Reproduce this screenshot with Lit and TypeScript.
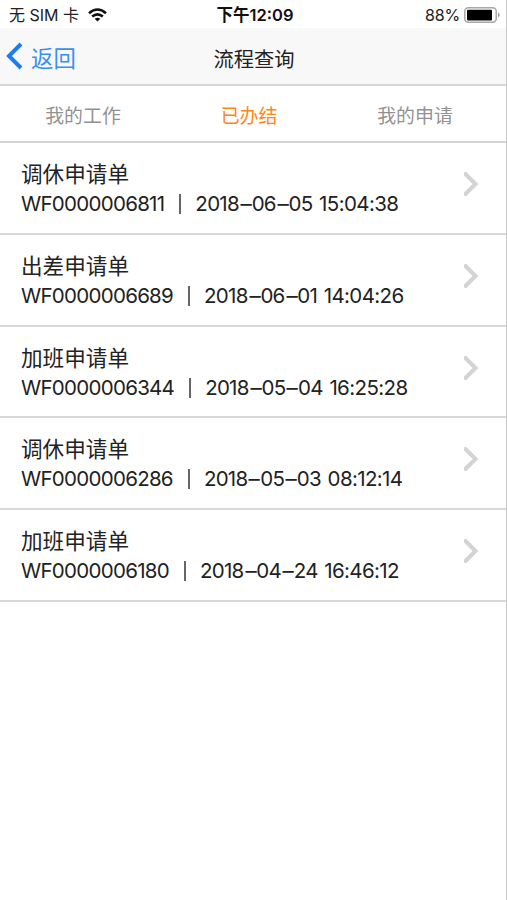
import { LitElement, html, css } from "lit";
import { customElement, property } from "lit/decorators.js";

interface Form {
  title: string;
  code: string;
  date: string[];
  time: string;
}

const forms: Form[] = [
  { title: "调休申请单", code: "WF0000006811", date: ["2018", "06", "05"], time: "15:04:38" },
  { title: "出差申请单", code: "WF0000006689", date: ["2018", "06", "01"], time: "14:04:26" },
  { title: "加班申请单", code: "WF0000006344", date: ["2018", "05", "04"], time: "16:25:28" },
  { title: "调休申请单", code: "WF0000006286", date: ["2018", "05", "03"], time: "08:12:14" },
  { title: "加班申请单", code: "WF0000006180", date: ["2018", "04", "24"], time: "16:46:12" },
];

@customElement("status-bar")
class StatusBar extends LitElement {
  static styles = css`
    :host { display: grid; grid-template-columns: 1fr auto 1fr; align-items: center; height: 28px;
      padding: 2px 6px 0 9px; box-sizing: border-box; background: #fff; color: #222; font-size: 16px; line-height: 24px; }
    .side { display: flex; align-items: center; gap: 9px; white-space: pre; }
    .right { justify-content: flex-end; gap: 4px; letter-spacing: -0.2px; }
    .clock { font-size: 16.5px; font-weight: 600; color: #111; padding-left: 1px; }
    svg { display: block; }
    .right svg { margin-right: -1px; }
  `;
  render() {
    return html`
      <div class="side"><span>无 SIM 卡</span>
        <svg width="19" height="14" viewBox="0 0 19 14" fill="none" stroke="#111" stroke-width="2.6">
          <path d="M1 5.2Q9.5 -2.2 18 5.2" /><path d="M4.2 8.6Q9.5 4.1 14.8 8.6" />
          <path d="M9.5 13.4L6.6 10.8Q9.5 8.8 12.4 10.8Z" fill="#111" stroke="none" />
        </svg>
      </div>
      <span class="clock">下午12:09</span>
      <div class="side right"><span>88%</span>
        <svg width="37" height="16" viewBox="0 0 37 16">
          <rect x=".8" y=".8" width="31.4" height="14.4" rx="3.5" fill="#fff" stroke="#a8a8a8" stroke-width="1.5" />
          <rect x="3" y="2.8" width="25" height="10.6" rx="1" fill="#000" />
          <path d="M34 5.5Q37.5 8 34 10.5Z" fill="#999" />
        </svg>
      </div>`;
  }
}

@customElement("form-row")
class FormRow extends LitElement {
  @property({ attribute: false }) form!: Form;
  static styles = css`
    :host { display: flex; justify-content: space-between; height: 91.75px; box-sizing: border-box;
      padding: 15px 26px 0 21px; border-bottom: 2px solid #d8d8d8; color: #222; }
    .title { font-size: 21.6px; line-height: 32px; }
    .meta { display: flex; align-items: center; font-size: 20.5px; line-height: 28px; letter-spacing: -0.72px; white-space: pre; }
    .bar { width: 2px; height: 20px; background: #666; margin: 0 14px 0 15px; }
    .dash { display: inline-block; margin: 0 1.2px 0 2px; transform: scaleX(1.1); }
    .time { margin-left: 1.4px; letter-spacing: -0.62px; }
    svg { display: block; margin-top: 14px; }
  `;
  render() {
    const { title, code, date, time } = this.form;
    return html`
      <div>
        <div class="title">${title}</div>
        <div class="meta"><span>${code}</span><span class="bar"></span><span>${date.map((part, i) => (i ? html`<span class="dash">–</span>${part}` : part))}<span class="time"> ${time}</span></span></div>
      </div>
      <svg width="16" height="24" viewBox="0 0 16 24" fill="none" stroke="#d3d3d3" stroke-width="4">
        <path d="M1.5 2L11.5 12L1.5 22" stroke-linecap="round" />
      </svg>`;
  }
}

@customElement("app-root")
class AppRoot extends LitElement {
  static styles = css`
    :host { display: block; height: 900px; box-sizing: border-box; border-right: 1px solid #c8c8c8; background: #fff;
      overflow: hidden; font-family: Inter, "Noto Sans CJK SC", sans-serif; }
    .nav { display: grid; grid-template-columns: 1fr auto 1fr; align-items: center; height: 58px; box-sizing: border-box;
      padding: 4px 4px 0 6px; background: #f8f8f8; border-bottom: 2px solid #d6d6d6; }
    .back { display: flex; align-items: center; gap: 8px; color: #3a8ff5; font-size: 22.4px; line-height: 32px; }
    .back svg { display: block; margin-bottom: 4px; }
    .back span { padding-top: 2px; }
    .heading { font-size: 20.3px; line-height: 30px; color: #222; padding-top: 3px; }
    .tabs { display: grid; grid-template-columns: repeat(3, 1fr); height: 57px; box-sizing: border-box; align-items: center;
      padding: 7px 8px 0 0; border-bottom: 2px solid #d4d4d4; text-align: center; font-size: 18.9px; line-height: 28px; color: #929292; }
    .active { color: #ff8519; }
  `;
  render() {
    return html`
      <status-bar></status-bar>
      <div class="nav">
        <div class="back">
          <svg width="17" height="28" viewBox="0 0 17 28" fill="none" stroke="#1b7df5" stroke-width="4">
            <path d="M15 2L3 14L15 26" />
          </svg><span>返回</span>
        </div>
        <div class="heading">流程查询</div>
      </div>
      <div class="tabs"><span>我的工作</span><span class="active">已办结</span><span>我的申请</span></div>
      ${forms.map((form) => html`<form-row .form=${form}></form-row>`)}`;
  }
}
